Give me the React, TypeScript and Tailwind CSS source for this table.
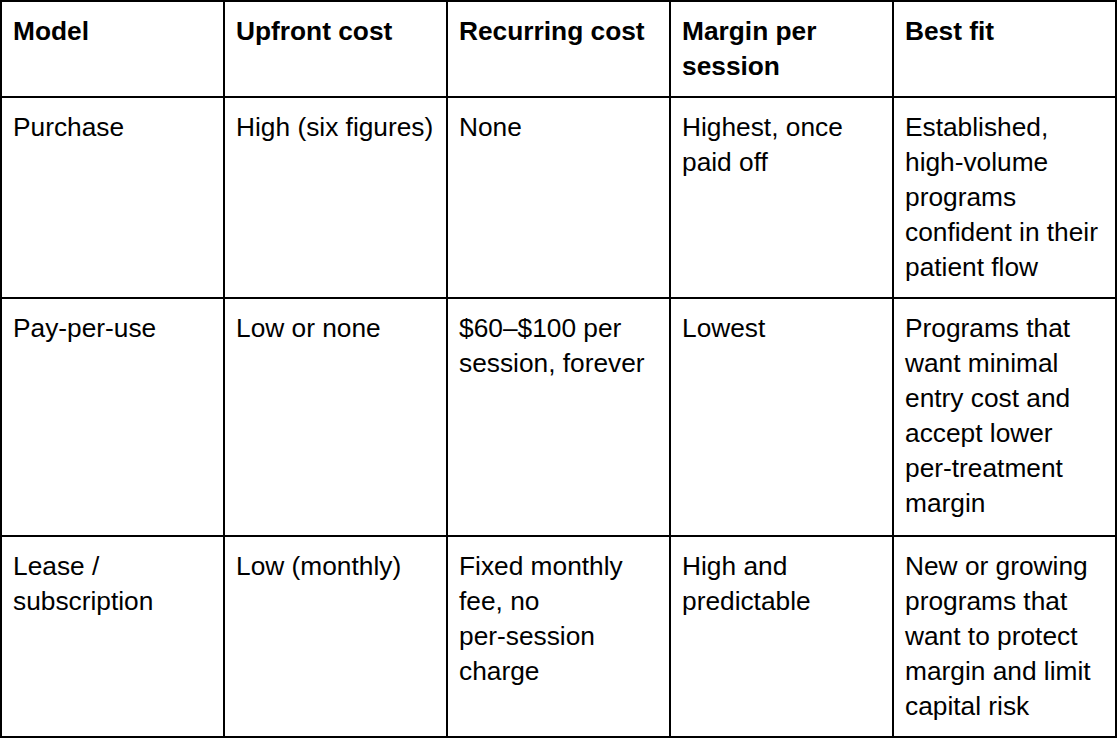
import React from "react";

const header = ["Model", "Upfront cost", "Recurring cost", "Margin per session", "Best fit"];
const rows: React.ReactNode[][] = [
  [
    "Purchase",
    "High (six figures)",
    "None",
    "Highest, once paid off",
    "Established, high-volume programs confident in their patient flow",
  ],
  [
    "Pay-per-use",
    "Low or none",
    "$60–$100 per session, forever",
    "Lowest",
    "Programs that want minimal entry cost and accept lower per-treatment margin",
  ],
  [
    "Lease / subscription",
    "Low (monthly)",
    <>
      Fixed monthly fee, no <span className="whitespace-nowrap">per-session</span> charge
    </>,
    "High and predictable",
    "New or growing programs that want to protect margin and limit capital risk",
  ],
];

export default function App() {
  return (
    <div className="bg-white w-[1118px] h-[738px] overflow-hidden">
      <table
        className="border-separate border-spacing-0 table-fixed w-[1117px] text-black text-[26.3px] leading-[35px]"
        style={{ fontFamily: '"Liberation Sans", Arial, sans-serif' }}
      >
        <colgroup>
          <col className="w-[225px]" />
          <col className="w-[223px]" />
          <col className="w-[223px]" />
          <col className="w-[223px]" />
          <col className="w-[223px]" />
        </colgroup>
        <thead>
          <tr>
            {header.map((h, i) => (
              <th
                key={h}
                className={`text-left align-top font-bold border-t-2 border-r-2 border-b-2 border-black pl-[11px] pr-[10px] pt-[12px] pb-[12px] ${
                  i === 0 ? "border-l-2" : ""
                }`}
              >
                {h}
              </th>
            ))}
          </tr>
        </thead>
        <tbody>
          {rows.map((r, ri) => (
            <tr key={ri}>
              {r.map((c, i) => (
                <td
                  key={i}
                  className={`align-top font-normal border-r-2 border-b-2 border-black pl-[11px] pr-[10px] pt-[12px] ${
                    ri === 1 ? "pb-[14px]" : "pb-[12px]"
                  } ${i === 0 ? "border-l-2" : ""}`}
                >
                  {c}
                </td>
              ))}
            </tr>
          ))}
        </tbody>
      </table>
    </div>
  );
}
